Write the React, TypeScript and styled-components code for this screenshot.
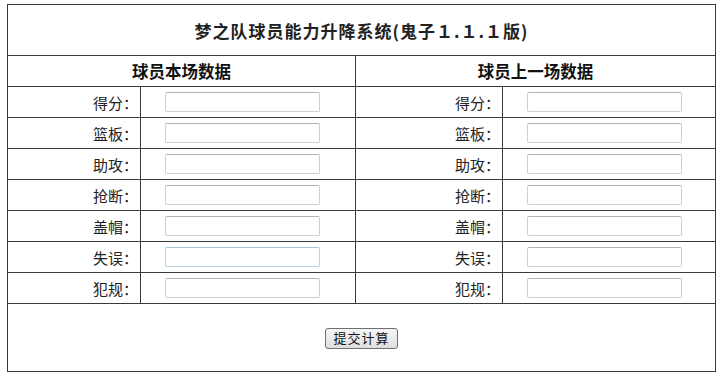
import React from 'react';
import styled, { createGlobalStyle } from 'styled-components';

const GlobalStyle = createGlobalStyle`
  body {
    margin: 0;
    padding: 4px 0 0 7px;
    background: #fff;
    font-family: "Noto Sans CJK SC", "Noto Sans", sans-serif;
    color: #111;
  }
`;

const Board = styled.form<{ $rows: number }>`
  display: grid;
  grid-template-columns: 132px 214px 146px 212px;
  grid-template-rows: 50px 30px repeat(${(p) => p.$rows}, 30px) 67px;
  gap: 1px;
  width: 709px;
  box-sizing: border-box;
  border: 1px solid #3a3a3a;
  background: #3a3a3a;
`;

const TitleCell = styled.div`
  grid-column: 1 / -1;
  display: flex;
  align-items: center;
  justify-content: center;
  background: #fff;
  font-size: 17px;
  font-weight: 600;
  letter-spacing: 1px;
  color: #222;
`;

const HeadCell = styled.div`
  grid-column: span 2;
  display: flex;
  align-items: center;
  justify-content: center;
  background: #fff;
  font-size: 16.5px;
  font-weight: 700;
  color: #111;
`;

const LabelCell = styled.label`
  display: flex;
  align-items: center;
  justify-content: flex-end;
  padding-right: 2px;
  background: #fff;
  font-size: 15px;
  color: #222;
`;

const FieldCell = styled.div`
  display: flex;
  align-items: center;
  padding-left: 24px;
  background: #fff;
`;

const Field = styled.input<{ $focused?: boolean }>`
  width: 155px;
  height: 20px;
  box-sizing: border-box;
  border: 1px solid ${(p) => (p.$focused ? '#b9d3e6' : '#cfcfcf')};
  border-top-color: ${(p) => (p.$focused ? '#a8c6dc' : '#b4b4b4')};
  border-radius: 2px;
  background: #fff;
  margin: 0;
  padding: 0 3px;
`;

const FooterCell = styled.div`
  grid-column: 1 / -1;
  display: flex;
  align-items: center;
  justify-content: center;
  background: #fff;
`;

const SubmitButton = styled.button`
  width: 73px;
  height: 21px;
  box-sizing: border-box;
  margin-top: 1px;
  padding: 0;
  border: 1px solid #707070;
  border-radius: 3px;
  background: linear-gradient(#f6f6f6, #dedede);
  font-family: inherit;
  font-size: 13px;
  color: #111;
  letter-spacing: 1px;
  line-height: 18px;
`;

const stats = ['得分', '篮板', '助攻', '抢断', '盖帽', '失误', '犯规'];

export default function App() {
  return (
    <>
      <GlobalStyle />
      <Board $rows={stats.length} onSubmit={(e) => e.preventDefault()}>
        <TitleCell>梦之队球员能力升降系统(鬼子１.１.１版)</TitleCell>
        <HeadCell>球员本场数据</HeadCell>
        <HeadCell>球员上一场数据</HeadCell>
        {stats.map((s) => (
          <React.Fragment key={s}>
            <LabelCell>{s}：</LabelCell>
            <FieldCell>
              <Field type="text" $focused={s === '失误'} />
            </FieldCell>
            <LabelCell>{s}：</LabelCell>
            <FieldCell>
              <Field type="text" />
            </FieldCell>
          </React.Fragment>
        ))}
        <FooterCell>
          <SubmitButton type="submit">提交计算</SubmitButton>
        </FooterCell>
      </Board>
    </>
  );
}
